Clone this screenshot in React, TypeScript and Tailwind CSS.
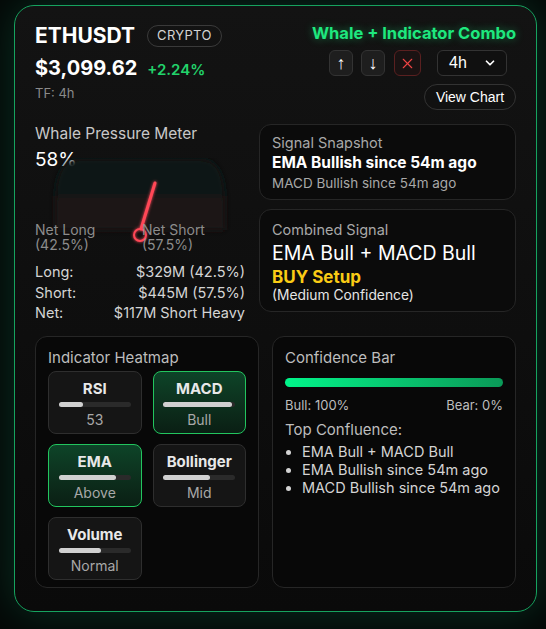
import { X, ChevronDown } from "lucide-react";

const tiles = [
  { name: "RSI", value: "53", fill: 33, active: false },
  { name: "MACD", value: "Bull", fill: 95, active: true },
  { name: "EMA", value: "Above", fill: 80, active: true },
  { name: "Bollinger", value: "Mid", fill: 65, active: false },
  { name: "Volume", value: "Normal", fill: 58, active: false },
];

function Gauge() {
  return (
    <svg
      className="absolute left-0 top-[34px]"
      width="210"
      height="88"
      viewBox="0 0 210 88"
    >
      <defs>
        <filter id="soft" x="-20%" y="-20%" width="140%" height="140%">
          <feGaussianBlur stdDeviation="3" />
        </filter>
        <filter id="glow" x="-50%" y="-50%" width="200%" height="200%">
          <feGaussianBlur stdDeviation="1.5" result="b" />
          <feMerge>
            <feMergeNode in="b" />
            <feMergeNode in="SourceGraphic" />
          </feMerge>
        </filter>
        <clipPath id="upper">
          <rect x="0" y="0" width="210" height="38" />
        </clipPath>
        <clipPath id="lower">
          <rect x="0" y="38" width="210" height="34" />
        </clipPath>
      </defs>
      <g filter="url(#soft)">
        <path
          clipPath="url(#upper)"
          d="M20 72 L20 45 C20 15 28 1 45 1 L165 1 C182 1 190 15 190 45 L190 72 Z"
          fill="#0f1913"
        />
        <path
          clipPath="url(#lower)"
          d="M20 72 L20 45 C20 15 28 1 45 1 L165 1 C182 1 190 15 190 45 L190 72 Z"
          fill="#1a1313"
        />
      </g>
      <g filter="url(#glow)">
        <line x1="106" y1="71" x2="120" y2="25" stroke="#ff4757" strokeWidth="3" strokeLinecap="round" />
        <circle cx="105" cy="77" r="6" fill="none" stroke="#ff4757" strokeWidth="2" />
      </g>
    </svg>
  );
}

export default function App() {
  return (
    <main className="min-h-screen bg-[#050807] font-['Inter',sans-serif] pt-[5px]">
      <div className="ml-[14px] w-[523px] h-[607px] rounded-[20px] border border-[#16a35f] bg-gradient-to-b from-[#131313] to-[#0a0a0a] px-5 pt-[16px] shadow-[0_0_40px_rgba(16,185,129,0.22)]">

        {/* HEADER */}
        <div className="flex justify-between">
          <div>
            <div className="flex items-center gap-3">
              <h1 className="text-[21px] leading-7 font-bold text-white">ETHUSDT</h1>
              <span className="h-[22px] px-[9px] flex items-center rounded-full border border-[#3a3a3a] text-[13px] tracking-wide text-[#d4d4d4]">
                CRYPTO
              </span>
            </div>
            <div className="flex items-baseline gap-[10px] mt-1">
              <span className="text-[20px] leading-7 font-bold text-white">$3,099.62</span>
              <span className="text-[15px] font-semibold text-[#22d36b]">+2.24%</span>
            </div>
            <p className="mt-[2px] text-[13px] leading-[18px] text-[#8a8a8a]">TF: 4h</p>
          </div>

          <div className="flex flex-col items-end">
            <h2 className="mt-[1px] text-[16.5px] leading-5 font-bold text-[#1ee87e] [text-shadow:0_0_8px_rgba(30,232,126,0.45)]">
              Whale + Indicator Combo
            </h2>
            <div className="mt-[7px] mr-[9px] flex items-center font-['Liberation_Sans',Arial,sans-serif]">
              <button className="w-6 h-[26px] rounded-md border border-[#333] bg-[#1e1e1e] text-white text-[18px] leading-none flex items-center justify-center">
                ↑
              </button>
              <button className="ml-2 w-6 h-[26px] rounded-md border border-[#333] bg-[#1e1e1e] text-white text-[18px] leading-none flex items-center justify-center">
                ↓
              </button>
              <button className="ml-[9px] w-[27px] h-[26px] rounded-md border border-[#5a2020] bg-[#1a1212] flex items-center justify-center">
                <X size={17} strokeWidth={1.6} className="text-[#ef4444]" />
              </button>
              <div className="ml-4 w-[70px] h-[26px] rounded-md border border-[#333] bg-[#101010] flex items-center justify-between pl-[11px] pr-[9px] text-white text-[16px]">
                4h
                <ChevronDown size={14} strokeWidth={3} className="text-white" />
              </div>
            </div>
            <button className="mt-2 w-[92px] h-[26px] rounded-full border border-[#333] bg-[#111] text-white text-[14px] font-['Liberation_Sans',Arial,sans-serif]">
              View Chart
            </button>
          </div>
        </div>

        {/* MAIN */}
        <div className="mt-[14px] grid grid-cols-[210px_1fr] gap-[14px]">
          <div className="relative">
            <p className="text-[15.5px] leading-5 text-[#c8c8c8]">Whale Pressure Meter</p>
            <p className="text-[19px] leading-7 text-white mt-[2px]">58%</p>
            <Gauge />
            <div className="relative mt-[48px] grid grid-cols-2 text-[14px] leading-[15px] text-[#8c8c8c]">
              <div>
                Net Long
                <br />
                (42.5%)
              </div>
              <div className="pl-[2px]">
                Net Short
                <br />
                (57.5%)
              </div>
            </div>
            <div className="mt-[10px] text-[14.5px] leading-[20.5px] text-[#d4d4d4]">
              <div className="flex justify-between">
                <span>Long:</span>
                <span>$329M (42.5%)</span>
              </div>
              <div className="flex justify-between">
                <span>Short:</span>
                <span>$445M (57.5%)</span>
              </div>
              <div className="flex justify-between">
                <span>Net:</span>
                <span>$117M Short Heavy</span>
              </div>
            </div>
          </div>

          <div className="flex flex-col gap-[9px]">
            <div className="rounded-xl border border-[#262626] bg-[#0b0b0b] px-3 pt-2 pb-[6px]">
              <p className="text-[14.5px] leading-5 text-[#a8a8a8]">Signal Snapshot</p>
              <p className="text-[15.5px] leading-5 font-bold text-white">EMA Bullish since 54m ago</p>
              <p className="text-[13.5px] leading-5 text-[#a8a8a8]">MACD Bullish since 54m ago</p>
            </div>
            <div className="rounded-xl border border-[#262626] bg-[#0b0b0b] px-3 pt-[10px] pb-2">
              <p className="text-[14.5px] leading-5 text-[#a8a8a8]">Combined Signal</p>
              <p className="text-[19.5px] leading-[27px] text-white">EMA Bull + MACD Bull</p>
              <p className="text-[17px] leading-5 font-bold text-[#facc15]">BUY Setup</p>
              <p className="text-[13.8px] leading-4 text-[#e5e5e5]">(Medium Confidence)</p>
            </div>
          </div>
        </div>

        {/* BOTTOM */}
        <div className="mt-[12px] grid grid-cols-[224px_1fr] gap-[13px]">
          <div className="h-[252px] rounded-xl border border-[#262626] bg-[#080808] px-3 pt-[11px]">
            <p className="text-[15px] leading-5 text-[#bdbdbd]">Indicator Heatmap</p>
            <div className="mt-[3px] grid grid-cols-2 gap-x-[11px] gap-y-[10px]">
              {tiles.map((t) => (
                <div
                  key={t.name}
                  className={
                    t.active
                      ? "h-[63px] rounded-lg border border-[#22c55e] bg-gradient-to-b from-[#0d4428] to-[#0a1f14] flex flex-col items-center pt-[7px]"
                      : "h-[63px] rounded-lg border border-[#2e2e2e] bg-[#151515] flex flex-col items-center pt-[7px]"
                  }
                >
                  <p className="text-[15px] leading-5 font-bold text-[#e8e8e8]">{t.name}</p>
                  <div className="mt-[3px] w-[72px] h-[5px] rounded-full bg-[#2a2a2a]">
                    <div className="h-full rounded-full bg-[#d0d0d0]" style={{ width: `${t.fill}%` }} />
                  </div>
                  <p className="mt-[4px] text-[14px] leading-[18px] text-[#a8a8a8]">{t.value}</p>
                </div>
              ))}
            </div>
          </div>

          <div className="h-[252px] rounded-xl border border-[#262626] bg-[#080808] px-3 pt-[11px]">
            <p className="text-[15px] leading-5 text-[#bdbdbd]">Confidence Bar</p>
            <div className="mt-[10px] h-[9px] rounded-full bg-gradient-to-r from-[#00f58a] to-[#0a9a58]" />
            <div className="mt-[9px] flex justify-between text-[13px] leading-[18px] text-[#bdbdbd]">
              <span>Bull: 100%</span>
              <span>Bear: 0%</span>
            </div>
            <p className="mt-[6px] text-[15px] leading-5 text-[#bdbdbd]">Top Confluence:</p>
            <ul className="mt-[3px] list-disc pl-[17px] text-[14.5px] leading-[18px] text-[#d4d4d4]">
              <li>EMA Bull + MACD Bull</li>
              <li>EMA Bullish since 54m ago</li>
              <li>MACD Bullish since 54m ago</li>
            </ul>
          </div>
        </div>
      </div>
    </main>
  );
}
